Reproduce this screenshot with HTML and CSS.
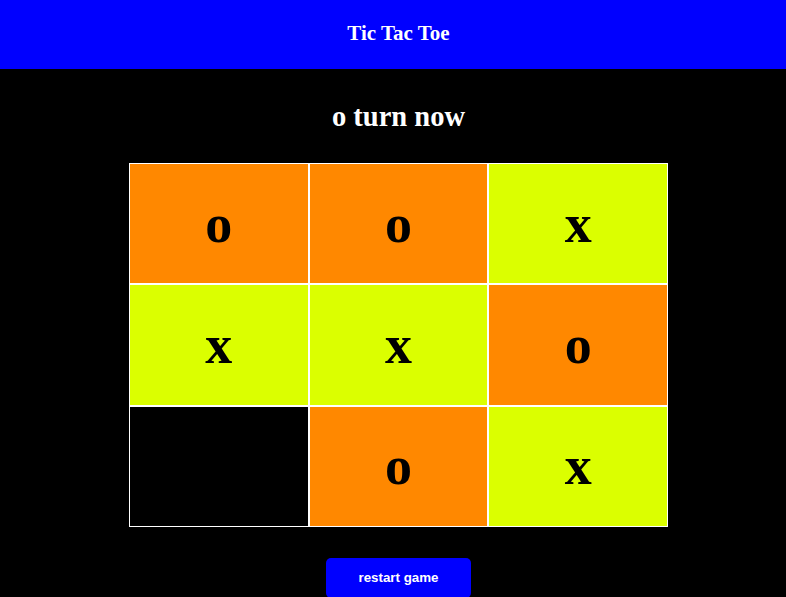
FILE: index.html
```
<!DOCTYPE html>
<html>
<head>
<meta charset="utf-8">
<link rel="stylesheet" href="styles.css">
</head>
<body>
<header class="top-bar">
  <h1 class="title">Tic Tac Toe</h1>
</header>
<main class="game">
  <h2 class="status">o turn now</h2>
  <div class="board">
    <div class="cell cell-o">o</div>
    <div class="cell cell-o">o</div>
    <div class="cell cell-x">x</div>
    <div class="cell cell-x">x</div>
    <div class="cell cell-x">x</div>
    <div class="cell cell-o">o</div>
    <div class="cell cell-empty"></div>
    <div class="cell cell-o">o</div>
    <div class="cell cell-x">x</div>
  </div>
  <button class="restart">restart game</button>
</main>
</body>
</html>
```
FILE: styles.css
```
html, body {
  margin: 0;
  padding: 0;
  background: #000;
  overflow: hidden;
}

body {
  font-family: "Liberation Serif", "Times New Roman", serif;
  color: #fff;
}

.top-bar {
  background: #0000ff;
  height: 69px;
  padding-left: 11px;
  display: flex;
  justify-content: center;
}

.title {
  margin: 0;
  font-size: 21px;
  font-weight: bold;
  line-height: 66px;
}

.game {
  padding-left: 11px;
  display: flex;
  flex-direction: column;
  align-items: center;
}

.status {
  margin: 31px 0 29px;
  font-size: 28.5px;
  font-weight: bold;
  line-height: 34px;
}

.board {
  display: grid;
  grid-template-columns: repeat(3, 179.67px);
  grid-template-rows: repeat(3, 121.33px);
}

.cell {
  box-sizing: border-box;
  border: 1px solid #fff;
  display: flex;
  align-items: center;
  justify-content: center;
  font-size: 54px;
  font-weight: bold;
  color: #000;
}

.cell-o {
  background: #ff8800;
}

.cell-x {
  background: #dbff00;
}

.cell-empty {
  background: #000;
}

.restart {
  margin-top: 31px;
  width: 145px;
  height: 40px;
  border: none;
  border-radius: 5px;
  background: #0000ff;
  color: #fff;
  font-family: "Liberation Sans", Arial, sans-serif;
  font-size: 13.33px;
  font-weight: bold;
  padding: 0;
}
```
